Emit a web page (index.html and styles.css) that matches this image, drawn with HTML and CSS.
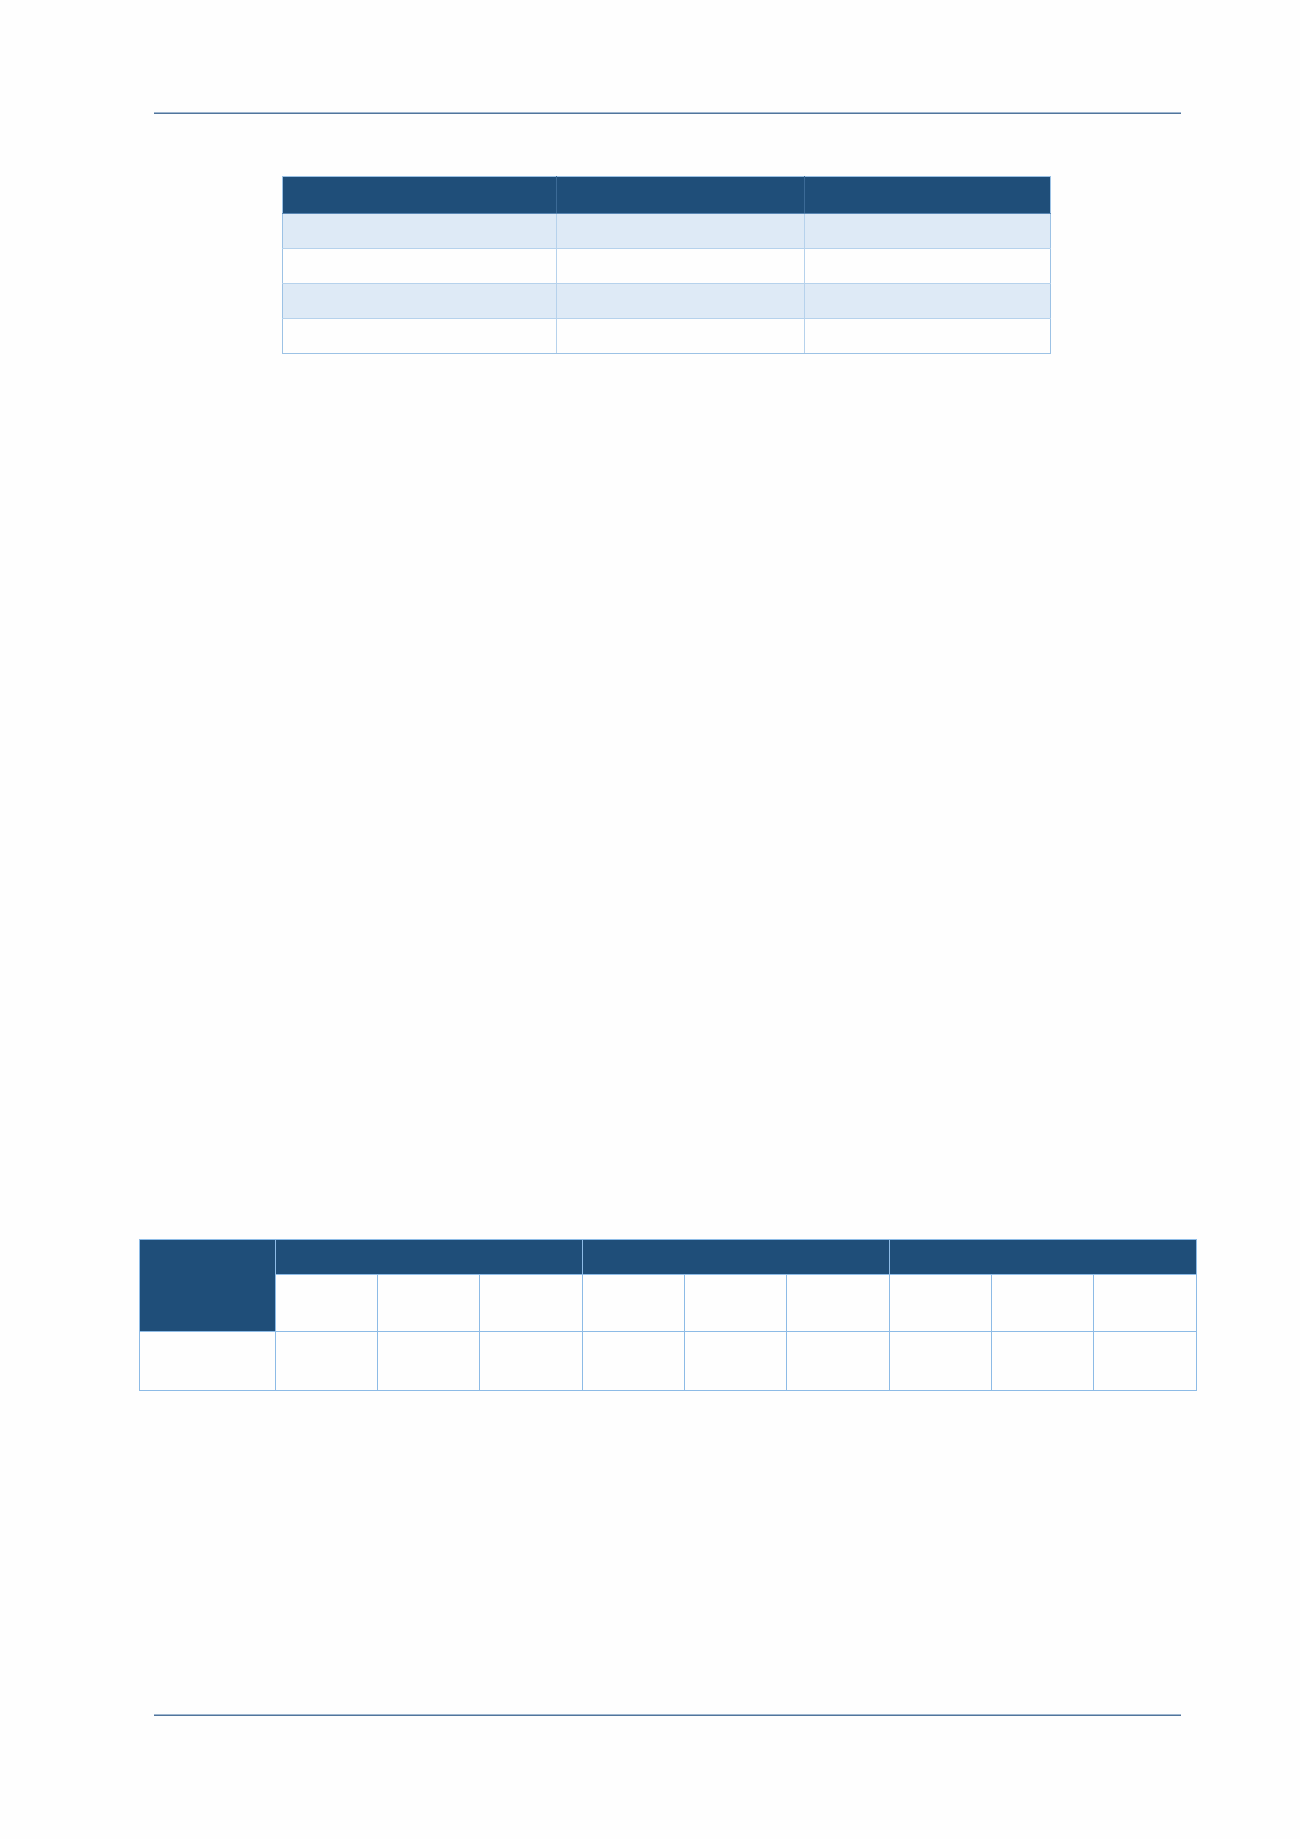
FILE: index.html
```html
<!DOCTYPE html>
<html>
<head>
<meta charset="utf-8">
<title>Document</title>
<link rel="stylesheet" href="styles.css">
</head>
<body>
<div class="page">
  <div class="content">
    <div class="rule rule-top"></div>
    <table class="grid t1">
      <colgroup><col class="c1a"><col class="c1b"><col class="c1c"></colgroup>
      <tr class="hd"><th></th><th></th><th></th></tr>
      <tr class="band"><td></td><td></td><td></td></tr>
      <tr><td></td><td></td><td></td></tr>
      <tr class="band"><td></td><td></td><td></td></tr>
      <tr><td></td><td></td><td></td></tr>
    </table>
    <table class="grid t2">
      <colgroup><col class="c2a"><col span="9" class="c2b"></colgroup>
      <tr class="hd r1"><th rowspan="2"></th><th colspan="3"></th><th colspan="3"></th><th colspan="3"></th></tr>
      <tr class="r2"><td></td><td></td><td></td><td></td><td></td><td></td><td></td><td></td><td></td></tr>
      <tr class="r3"><td></td><td></td><td></td><td></td><td></td><td></td><td></td><td></td><td></td><td></td></tr>
    </table>
    <div class="rule rule-bottom"></div>
  </div>
</div>
</body>
</html>
```
FILE: styles.css
```css
html, body {
  margin: 0;
  padding: 0;
  background: #fefefe;
  font-family: "Liberation Sans", Arial, sans-serif;
}
.page {
  width: 1300px;
  height: 1839px;
  padding-top: 112px;
  box-sizing: border-box;
}
.content {
  margin-left: 154px;
  width: 1027px;
  display: flex;
  flex-direction: column;
}
.rule {
  height: 2px;
  background: #51759c;
  border-top: 1px solid #9fb6cf;
  box-sizing: border-box;
}
.grid {
  border-collapse: collapse;
  align-self: center;
}
.grid th, .grid td {
  padding: 0;
  border: 1px solid #9cc2e5;
}
.grid th {
  background: #1f4e79;
}
.t1 {
  margin-top: 62px;
  width: 768px;
  table-layout: fixed;
  position: relative;
  left: -1px;
}
.c1a { width: 274px; }
.c1b { width: 248px; }
.c1c { width: 246px; }
.t1 .hd th {
  height: 36px;
  border-left-color: #3b6a96;
  border-right-color: #3b6a96;
  border-bottom-color: #5a87b3;
}
.t1 .hd th:first-child { border-left-color: #9cc2e5; }
.t1 .hd th:last-child { border-right-color: #9cc2e5; }
.t1 td {
  height: 34px;
  border-color: #b6d2ec;
}
.t1 tr:last-child td { border-bottom-color: #9cc2e5; }
.t1 td:first-child { border-left-color: #9cc2e5; }
.t1 td:last-child { border-right-color: #9cc2e5; }
.t1 .band td {
  background: #deeaf6;
}
.t2 {
  margin-top: 885px;
  width: 1058px;
  table-layout: fixed;
}
.c2a { width: 136px; }
.c2b { width: 102px; }
.t2 th, .t2 td {
  border-color: #8dbbe6;
}
.t2 .r1 th { height: 34px; }
.t2 .r2 td { height: 56px; }
.t2 .r3 td { height: 58px; }
.t2 .r1 th + th { border-left-color: #8dbbe6; }
.rule-bottom {
  margin-top: 323px;
}
```
